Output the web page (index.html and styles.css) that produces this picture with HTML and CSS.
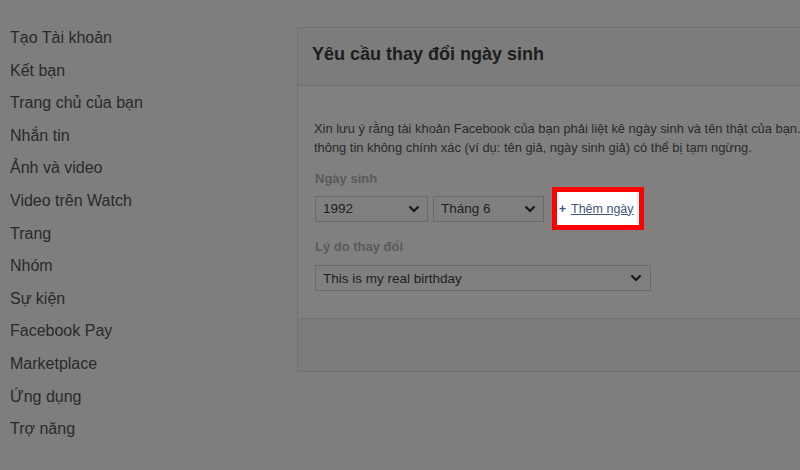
FILE: index.html
```html
<!DOCTYPE html>
<html lang="vi">
<head>
<meta charset="utf-8">
<title>Yêu cầu thay đổi ngày sinh</title>
<link rel="stylesheet" href="styles.css">
</head>
<body>
<div class="page">
  <nav class="sidebar">
    <a class="nav-item">Tạo Tài khoản</a>
    <a class="nav-item">Kết bạn</a>
    <a class="nav-item">Trang chủ của bạn</a>
    <a class="nav-item">Nhắn tin</a>
    <a class="nav-item">Ảnh và video</a>
    <a class="nav-item">Video trên Watch</a>
    <a class="nav-item">Trang</a>
    <a class="nav-item">Nhóm</a>
    <a class="nav-item">Sự kiện</a>
    <a class="nav-item">Facebook Pay</a>
    <a class="nav-item">Marketplace</a>
    <a class="nav-item">Ứng dụng</a>
    <a class="nav-item">Trợ năng</a>
  </nav>
  <section class="dialog">
    <header class="dialog-header">
      <h2 class="dialog-title">Yêu cầu thay đổi ngày sinh</h2>
    </header>
    <div class="dialog-body">
      <p class="notice">Xin lưu ý rằng tài khoản Facebook của bạn phải liệt kê ngày sinh và tên thật của bạn.<br>thông tin không chính xác (ví dụ: tên giả, ngày sinh giả) có thể bị tạm ngừng.</p>
      <div class="label">Ngày sinh</div>
      <div class="date-row">
        <div class="select select-year"><span>1992</span><svg class="chev" viewBox="0 0 12 8" width="12" height="8"><path d="M1.5 1.5 L6 6 L10.5 1.5" fill="none" stroke="#1a1a1a" stroke-width="2.2"/></svg></div>
        <div class="select select-month"><span>Tháng 6</span><svg class="chev" viewBox="0 0 12 8" width="12" height="8"><path d="M1.5 1.5 L6 6 L10.5 1.5" fill="none" stroke="#1a1a1a" stroke-width="2.2"/></svg></div>
        <div class="highlight"><a class="add-day"><span class="plus">+</span><span class="add-text">Thêm ngày</span></a></div>
      </div>
      <div class="label label-reason">Lý do thay đổi</div>
      <div class="select select-reason"><span>This is my real birthday</span><svg class="chev" viewBox="0 0 12 8" width="12" height="8"><path d="M1.5 1.5 L6 6 L10.5 1.5" fill="none" stroke="#1a1a1a" stroke-width="2.2"/></svg></div>
    </div>
    <footer class="dialog-footer"></footer>
  </section>
</div>
</body>
</html>
```
FILE: styles.css
```css
html, body {
  margin: 0;
  padding: 0;
  background: #7e7e7e;
  overflow: hidden;
}
body {
  width: 800px;
  height: 470px;
  font-family: "Liberation Sans", Arial, sans-serif;
  color: #222;
}
.page {
  display: flex;
  align-items: flex-start;
  width: 800px;
  height: 470px;
  overflow: hidden;
}
.sidebar {
  flex: 0 0 297px;
  display: flex;
  flex-direction: column;
  padding-top: 22px;
}
.nav-item {
  display: block;
  padding-left: 10px;
  font-size: 16px;
  line-height: 32.6px;
  color: #2a2a2a;
  white-space: nowrap;
}
.dialog {
  flex: 0 0 540px;
  margin-top: 27px;
  border: 1px solid #717171;
  background: #7f7f7f;
  box-sizing: border-box;
}
.dialog-header {
  box-sizing: border-box;
  height: 58px;
  display: flex;
  align-items: center;
  padding-left: 14px;
  padding-bottom: 4px;
  background: #7c7c7c;
  border-bottom: 1px solid #727272;
}
.dialog-title {
  margin: 0;
  font-size: 18px;
  font-weight: bold;
  color: #1d1d1d;
}
.dialog-body {
  padding: 33px 0 27px 17px;
  background: #808080;
}
.notice {
  margin: 0 0 0 -1px;
  font-size: 12.9px;
  line-height: 19px;
  color: #2a2a2a;
  white-space: nowrap;
}
.label {
  margin-top: 14px;
  font-size: 13px;
  font-weight: bold;
  line-height: 16px;
  color: #5a5a5a;
}
.date-row {
  display: flex;
  align-items: center;
  gap: 5px;
}
.select {
  box-sizing: border-box;
  height: 26px;
  display: flex;
  align-items: center;
  justify-content: space-between;
  padding: 0 7px 0 7px;
  border: 1px solid #6b6b6b;
  background: #7f7f7f;
  font-size: 13.5px;
  color: #1e1e1e;
}
.select-year { width: 113px; }
.select-month { width: 111px; }
.select-reason {
  width: 336px;
  margin-top: 10px;
  padding-left: 7px;
  padding-right: 8px;
}
.chev { display: block; }
.highlight {
  box-sizing: border-box;
  margin-left: 3px;
  width: 92px;
  height: 43px;
  border: 5px solid #ff0000;
  background: #ffffff;
  display: flex;
  align-items: center;
  padding-left: 2px;
}
.add-day {
  display: flex;
  align-items: center;
  color: #45557c;
  font-size: 12.5px;
}
.plus {
  font-size: 12px;
  font-weight: bold;
  margin-right: 5px;
  color: #45557c;
}
.add-text {
  text-decoration: underline;
}
.label-reason {
  margin-top: 9px;
}
.dialog-footer {
  height: 52px;
  background: #7b7b7b;
  border-top: 1px solid #747474;
}
```
